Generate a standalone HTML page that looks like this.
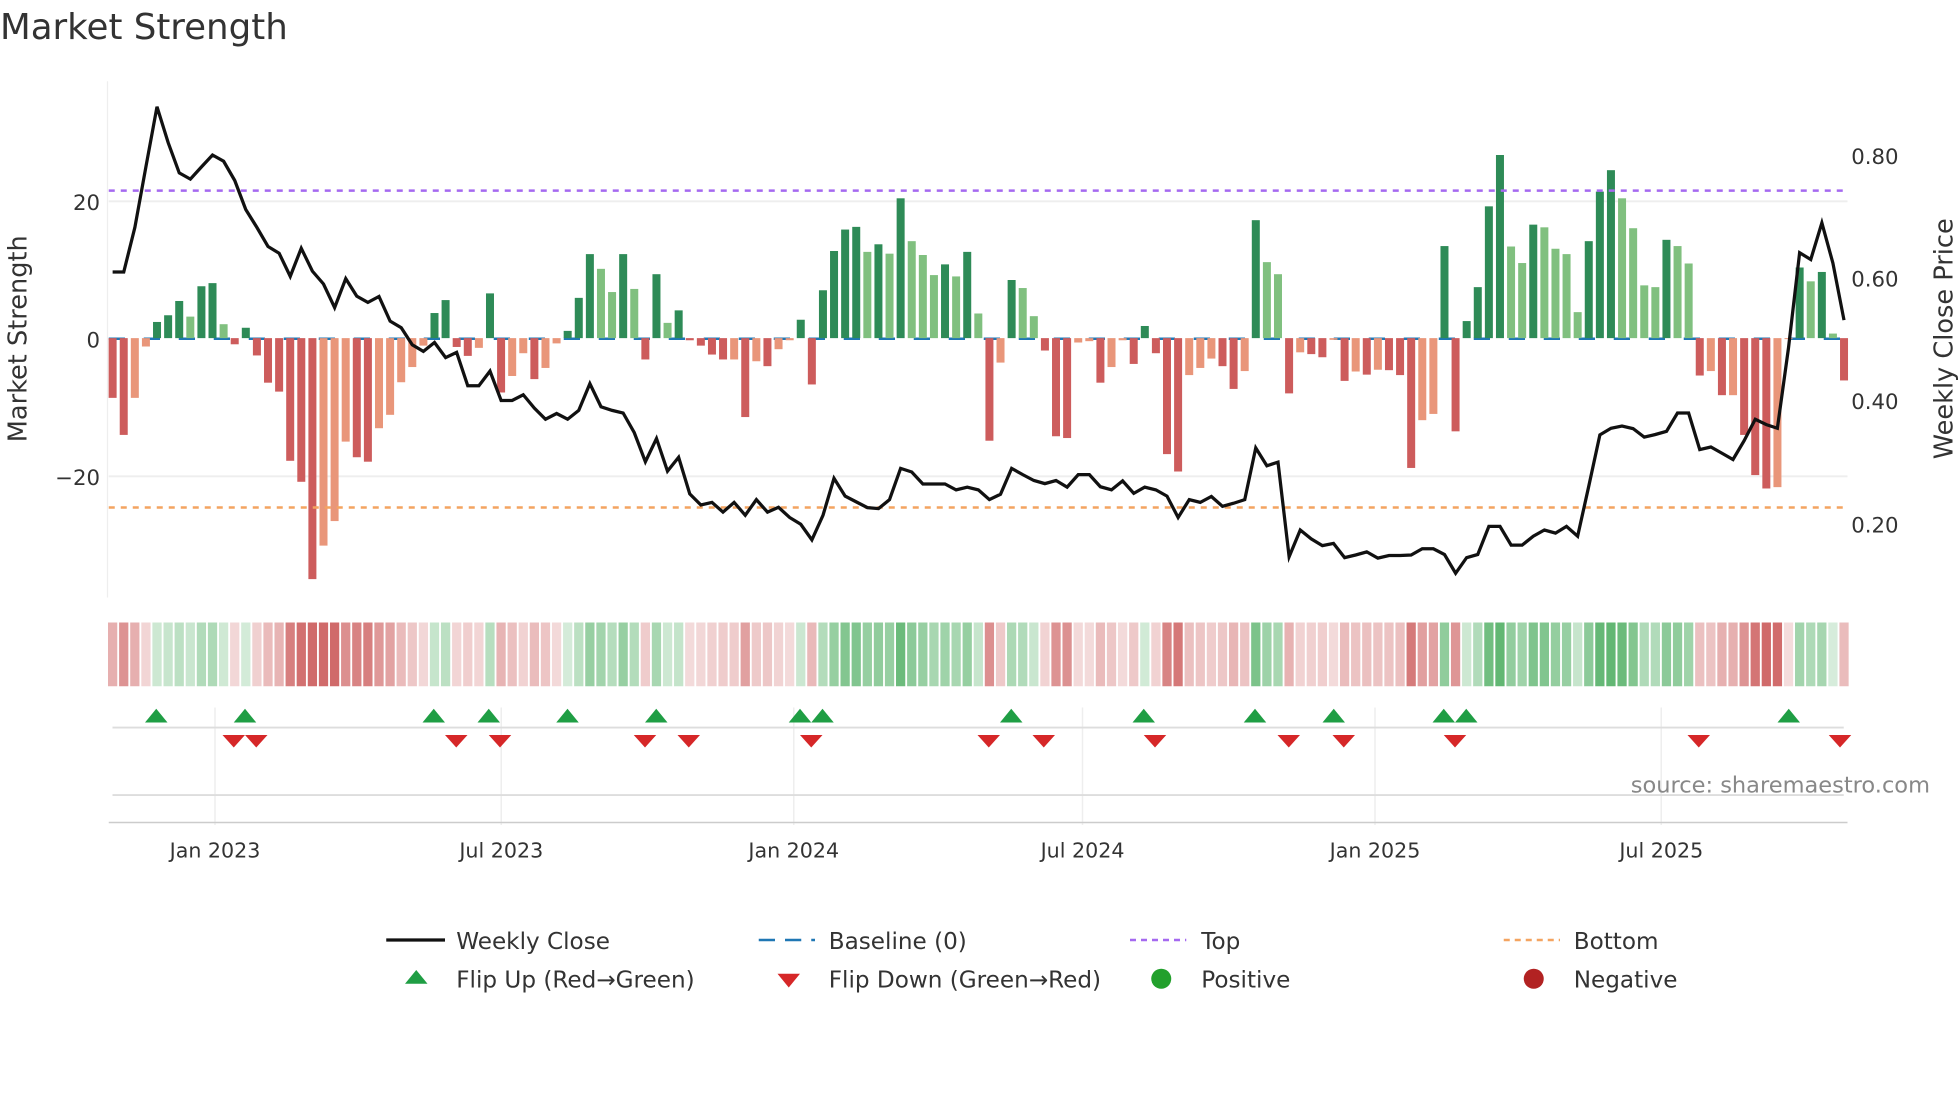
<!DOCTYPE html>
<html><head><meta charset="utf-8"><style>
html,body{margin:0;padding:0;background:#fff;width:1960px;height:1102px;overflow:hidden}
svg{display:block}
text{font-family:"DejaVu Sans","Liberation Sans",sans-serif}
</style></head><body>
<svg id="s" width="1960" height="1102" viewBox="0 0 1568 881.6" xmlns="http://www.w3.org/2000/svg">
<rect width="1568" height="882" fill="#fff"/>
<text x="0" y="31" font-size="28.5" fill="#333">Market Strength</text>
<line x1="86" y1="65" x2="86" y2="478" stroke="#eee" stroke-width="1"/>
<line x1="87" y1="161" x2="1478" y2="161" stroke="#eee" stroke-width="1.5"/>
<line x1="87" y1="381" x2="1478" y2="381" stroke="#eee" stroke-width="1.5"/>
<text x="80" y="168" font-size="17" fill="#333" text-anchor="end">20</text>
<text x="80" y="278" font-size="17" fill="#333" text-anchor="end">0</text>
<text x="80" y="388" font-size="17" fill="#333" text-anchor="end">−20</text>
<text x="1481" y="131" font-size="17" fill="#333">0.80</text>
<text x="1481" y="229" font-size="17" fill="#333">0.60</text>
<text x="1481" y="327" font-size="17" fill="#333">0.40</text>
<text x="1481" y="426" font-size="17" fill="#333">0.20</text>
<text transform="translate(21,271) rotate(-90)" font-size="20.5" fill="#333" text-anchor="middle">Market Strength</text>
<text transform="translate(1562,271) rotate(-90)" font-size="20.5" fill="#333" text-anchor="middle">Weekly Close Price</text>
<line x1="87" y1="271" x2="1476" y2="271" stroke="#1f77b4" stroke-width="2" stroke-dasharray="13 15"/>
<g id="bars"></g>
<line x1="87" y1="152.5" x2="1478" y2="152.5" stroke="#a569f0" stroke-width="2" stroke-dasharray="4.8 4.8"/>
<line x1="87" y1="406" x2="1478" y2="406" stroke="#f4a460" stroke-width="2" stroke-dasharray="4.8 4.8"/>
<polyline id="pl" fill="none" stroke="#111" stroke-width="2.6" stroke-linejoin="miter"/>
<g id="strip"></g>
<g stroke="#eee" stroke-width="1.2">
<line x1="172" y1="566" x2="172" y2="660"/><line x1="401" y1="566" x2="401" y2="660"/><line x1="635" y1="566" x2="635" y2="660"/><line x1="866" y1="566" x2="866" y2="660"/><line x1="1100" y1="566" x2="1100" y2="660"/><line x1="1329" y1="566" x2="1329" y2="660"/>
</g>
<line x1="90" y1="582" x2="1475" y2="582" stroke="#ddd" stroke-width="1.5"/>
<line x1="90" y1="636" x2="1475" y2="636" stroke="#ddd" stroke-width="1.5"/>
<line x1="87" y1="658" x2="1478" y2="658" stroke="#ccc" stroke-width="1.2"/>
<g id="mk"></g>
<text x="1544" y="634" font-size="18" fill="#888" text-anchor="end">source: sharemaestro.com</text>
<g font-size="16.5" fill="#333" text-anchor="middle">
<text x="172" y="686">Jan 2023</text><text x="401" y="686">Jul 2023</text><text x="635" y="686">Jan 2024</text><text x="866" y="686">Jul 2024</text><text x="1100" y="686">Jan 2025</text><text x="1329" y="686">Jul 2025</text>
</g>
<g font-size="18.5" fill="#333">
<line x1="309" y1="752" x2="356" y2="752" stroke="#111" stroke-width="2.6"/>
<text x="365" y="759">Weekly Close</text>
<line x1="607" y1="752" x2="652" y2="752" stroke="#1f77b4" stroke-width="2" stroke-dasharray="13 8"/>
<text x="663" y="759">Baseline (0)</text>
<line x1="904" y1="752" x2="949" y2="752" stroke="#a569f0" stroke-width="2" stroke-dasharray="4.8 4"/>
<text x="961" y="759">Top</text>
<line x1="1203" y1="752" x2="1248" y2="752" stroke="#f4a460" stroke-width="2" stroke-dasharray="4.8 4"/>
<text x="1259" y="759">Bottom</text>
<polygon points="324,787 342,787 333,776" fill="#1f9e44"/>
<text x="365" y="790">Flip Up (Red→Green)</text>
<polygon points="622,779 640,779 631,790" fill="#d62728"/>
<text x="663" y="790">Flip Down (Green→Red)</text>
<circle cx="929" cy="783" r="8" fill="#22a02c"/>
<text x="961" y="790">Positive</text>
<circle cx="1227" cy="783" r="8" fill="#b22222"/>
<text x="1259" y="790">Negative</text>
</g>
</svg>
<script>
(function(){
var NS="http://www.w3.org/2000/svg";
function el(t,a,p){var e=document.createElementNS(NS,t);for(var k in a)e.setAttribute(k,a[k]);p.appendChild(e);return e;}
var zy=[712,795,712,597,542,527,495,530,462,455,547,592,555,617,678,698,853,900,1118,1043,988,810,845,855,780,750,677,643,595,522,493,598,618,600,478,700,663,612,670,645,590,
562,488,390,423,475,390,468,626,435,544,516,583,595,615,626,626,755,630,641,603,583,537,682,471,383,335,329,385,368,389,265,361,392,437,413,440,385,523,808,633,
448,466,529,606,798,802,588,585,678,643,583,636,551,612,838,877,661,645,624,641,692,652,314,408,435,702,610,614,621,582,674,653,660,649,650,661,869,762,748,
372,787,540,464,283,168,373,410,324,330,378,390,520,361,250,202,265,332,460,464,358,372,411,662,652,706,706,795,885,915,912,580,420,451,430,568,673];
var code="RRrrGGGgGGgRGRRRRRRrrrRRrrrrrGGRRrGRrrRrr"+"GGGggGgRGgGRRRRrRrRrrGRGGGGgGgGgggGgGgRr"+"GggRRRrrRrrRGRRRrrrRRrGggRrRRrRrRrRRRrr"+"G"+"RGGGGggGgg"+"ggGGGggggG"+"ggRrRrRRRr"+"rGgGgR";
var ly=[430,430,330,195,60,140,208,222,195,168,182,225,290,330,373,388,440,377,428,457,510,445,484,498,485,540,555,593,608,588,622,610,685,685,652,718,718,705,735,760,747,
760,740,680,732,740,746,790,855,803,876,845,927,952,946,968,946,975,940,968,957,980,995,1030,975,892,932,945,958,960,940,870,878,905,905,905,918,912,918,940,928,
870,884,897,904,897,912,884,884,911,918,898,926,912,918,932,980,940,946,933,955,948,940,824,864,856,1068,1008,1028,1043,1038,1070,1064,1057,1071,1065,1065,1064,1050,1050,
1063,1105,1070,1063,1000,1000,1042,1042,1022,1008,1015,1000,1022,910,795,780,775,781,800,794,787,746,746,828,822,836,850,808,760,772,780,600,387,402,320,410,538];
var N=zy.length,x0=90.1,dx=8.879,col={G:"#2e8b57",g:"#80c07f",R:"#cd5c5c",r:"#e9967a"};
var bars=document.getElementById("bars"),strip=document.getElementById("strip");
var pts=[];
for(var i=0;i<N;i++){
 var x=x0+i*dx,yy=64+zy[i]/2.8,zz=270.5,c=code[i]||"r";
 var ty=Math.min(yy,zz),hh=Math.max(Math.abs(yy-zz),0.8);
 el("rect",{x:(x-3.2).toFixed(2),y:ty.toFixed(2),width:6.4,height:hh.toFixed(2),fill:col[c]},bars);
 var v=(zz-yy)/5.5,t=Math.min(Math.abs(v)/22,1),a=0.2+0.65*t;
 var fc=v>=0?"rgba(70,170,90,"+a.toFixed(2)+")":"rgba(200,80,80,"+a.toFixed(2)+")";
 el("rect",{x:(x-3.7).toFixed(2),y:498,width:7.4,height:51,fill:fc},strip);
 if(ly[i]!==undefined)pts.push(x.toFixed(1)+","+(64+ly[i]/2.8).toFixed(1));
}
document.getElementById("pl").setAttribute("points",pts.join(" "));
var mk=document.getElementById("mk");
[125,196,347,391,454,525,640,658,809,915,1004,1067,1155,1173,1431].forEach(function(x){el("polygon",{points:(x-9)+",578 "+(x+9)+",578 "+x+",567",fill:"#1f9e44"},mk);});
[187,205,365,400,516,551,649,791,835,924,1031,1075,1164,1359,1472].forEach(function(x){el("polygon",{points:(x-9)+",588 "+(x+9)+",588 "+x+",598",fill:"#d62728"},mk);});
})();
</script>
</body></html>
